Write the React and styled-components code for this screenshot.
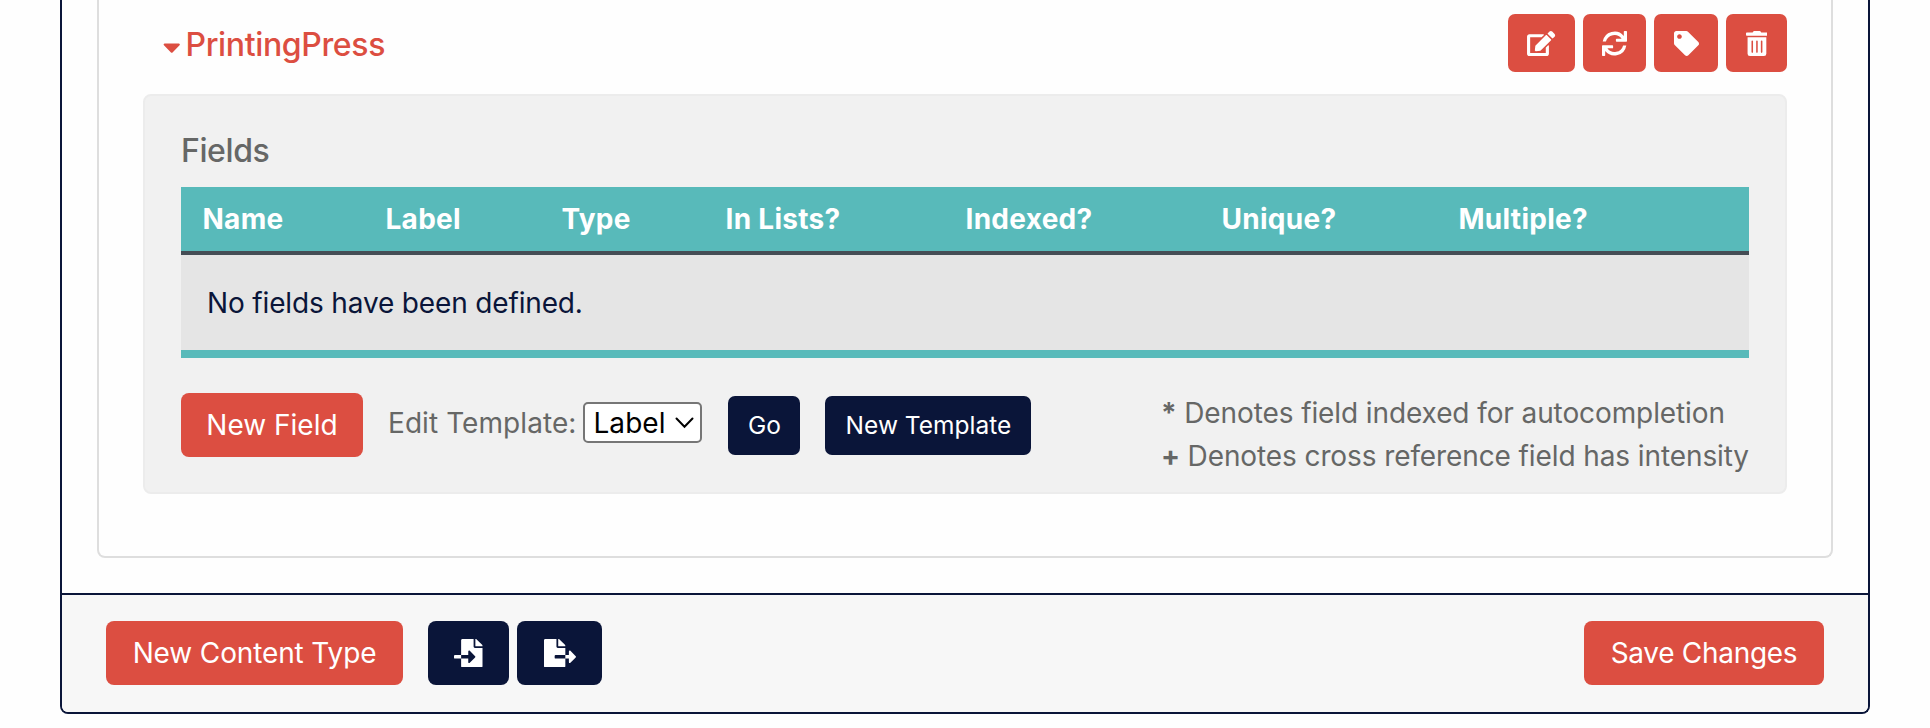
import React from 'react';
import styled, { createGlobalStyle, css } from 'styled-components';
import { FaEdit, FaTag, FaTrashAlt, FaFileImport, FaFileExport, FaCaretDown } from 'react-icons/fa';

const red = '#dc4e41';
const navy = '#0a1539';
const teal = '#58baba';
const grey = '#666766';

const GlobalStyle = createGlobalStyle`
  *, *::before, *::after { box-sizing: border-box; }
  body {
    margin: 0;
    background: #fefefe;
    color: ${grey};
    font-family: Inter, "Liberation Sans", sans-serif;
    font-size: 28px;
    line-height: 42px;
  }
`;

const Card = styled.main`
  width: 1810px;
  margin-left: 60px;
  border: 2px solid ${navy};
  border-top: 0;
  border-radius: 0 0 8px 8px;
  overflow: hidden;
  background: #fefefe;
`;

const CardBody = styled.div`
  height: 593px;
  padding: 0 35px 35px;
`;

const TypeList = styled.section`
  height: 558px;
  padding: 14px 44px 0;
  border: 2px solid #dedede;
  border-top: 0;
  border-radius: 0 0 8px 8px;
`;

const TypeHeader = styled.header`
  display: flex;
  justify-content: space-between;
  height: 80px;
`;

const TypeTitle = styled.h2`
  display: flex;
  align-items: center;
  gap: 5px;
  height: 58px;
  margin: 2px 0 0 20px;
  color: ${red};
  font-size: 32px;
  font-weight: 500;
  letter-spacing: -0.36px;
`;

const Caret = styled(FaCaretDown)`
  width: 17.5px;
  height: 28px;
  margin-top: 4px;
`;

const ButtonGroup = styled.div`
  display: flex;
  align-items: flex-start;
  gap: 8px;
`;

const sizes = {
  large: css`
    height: 64px;
    border-radius: 8px;
    font-size: 28px;
  `,
  small: css`
    height: 59px;
    border-radius: 7px;
    font-size: 24.5px;
  `,
  icon: css`
    height: 58px;
    border-radius: 7px;
  `,
};

const Button = styled.button`
  display: flex;
  flex: none;
  align-items: center;
  justify-content: center;
  width: ${({ $width }) => $width}px;
  padding: 0;
  border: 0;
  background: ${({ $dark }) => ($dark ? navy : red)};
  color: #fff;
  font-family: inherit;
  letter-spacing: ${({ $tracking = 0 }) => $tracking}px;
  ${({ $size = 'large' }) => sizes[$size]}

  svg {
    width: ${({ $icon }) => $icon}px;
    height: ${({ $size }) => ($size === 'icon' ? 25 : 28.5)}px;
  }
`;

const FieldsPanel = styled.div`
  height: 400px;
  padding: 36px 36px 0;
  border: 2px solid #ececec;
  border-radius: 8px;
  background: #f1f1f1;
`;

const PanelTitle = styled.h3`
  margin: 0 0 17px;
  font-size: 32px;
  font-weight: 500;
  line-height: 38px;
  letter-spacing: -0.4px;
`;

const Table = styled.table`
  width: 1568px;
  table-layout: fixed;
  border-spacing: 0;
  border-bottom: 8px solid ${teal};
`;

const HeadCell = styled.th`
  width: ${({ $width }) => $width}px;
  height: 68px;
  padding: 0 0 0 21.5px;
  border-bottom: 4px solid #454d55;
  background: ${teal};
  color: #fff;
  font-weight: 700;
  letter-spacing: 0.28px;
  text-align: left;
`;

const EmptyCell = styled.td`
  height: 95px;
  padding: 0 26px;
  background: #e5e5e5;
  color: ${navy};
  letter-spacing: -0.15px;
`;

const PanelFooter = styled.div`
  display: flex;
  align-items: flex-start;
  justify-content: space-between;
  padding-top: 34px;
`;

const Actions = styled.div`
  display: flex;
  align-items: center;
  height: 66px;
`;

const TemplatePicker = styled.div`
  display: flex;
  align-items: center;
  gap: 7px;
  margin: 0 26px 5px 25px;
  letter-spacing: 0.07px;
`;

const Select = styled.div`
  display: flex;
  align-items: center;
  gap: 9px;
  width: 119px;
  height: 41px;
  padding-left: 8px;
  border: 2px solid #767676;
  border-radius: 5px;
  background: #fff;
  color: #000;
`;

const Chevron = styled.svg`
  width: 19px;
  height: 12px;
  fill: none;
  stroke: #000;
  stroke-width: 2;
  stroke-linecap: round;
`;

const SmallButtons = styled.div`
  display: flex;
  gap: 25px;
`;

const Notes = styled.div`
  line-height: 43px;
  letter-spacing: -0.1px;
  white-space: nowrap;
`;

const CardFooter = styled.footer`
  display: flex;
  justify-content: space-between;
  height: 119px;
  padding: 26px 44px 0;
  border-top: 2px solid ${navy};
  background: #f7f7f7;
`;

const FooterActions = styled.div`
  display: flex;
  gap: 25px;
`;

const refreshArrow =
  'M.7 10.6A12 12 0 0 1 21.8 4.9V.8q0-.7.7-.7h1.8q.7 0 .7.7V10q0 .7-.7.7h-9.7q-.7 0-.7-.7V8.3q0-.6.7-.6h5A8.8 8.8 0 0 0 3.9 10.6Z';

function RefreshIcon() {
  return (
    <svg viewBox="0 0 25 25" fill="currentColor">
      <path d={refreshArrow} />
      <path d={refreshArrow} transform="rotate(180 12.5 12.5)" />
    </svg>
  );
}

const columns = [
  ['Name', 183],
  ['Label', 176],
  ['Type', 164],
  ['In Lists?', 240],
  ['Indexed?', 256],
  ['Unique?', 237],
  ['Multiple?', 312],
];

export default function App() {
  return (
    <>
      <GlobalStyle />
      <Card>
        <CardBody>
          <TypeList>
            <TypeHeader>
              <TypeTitle><Caret />PrintingPress</TypeTitle>
              <ButtonGroup>
                <Button $size="icon" $width={67} $icon={28.2} aria-label="Edit"><FaEdit /></Button>
                <Button $size="icon" $width={63} $icon={25} aria-label="Refresh"><RefreshIcon /></Button>
                <Button $size="icon" $width={64} $icon={25} aria-label="Label"><FaTag /></Button>
                <Button $size="icon" $width={61} $icon={21.9} aria-label="Delete"><FaTrashAlt /></Button>
              </ButtonGroup>
            </TypeHeader>
            <FieldsPanel>
              <PanelTitle>Fields</PanelTitle>
              <Table>
                <thead>
                  <tr>
                    {columns.map(([name, width]) => (
                      <HeadCell key={name} $width={width}>{name}</HeadCell>
                    ))}
                  </tr>
                </thead>
                <tbody>
                  <tr>
                    <EmptyCell colSpan={columns.length}>No fields have been defined.</EmptyCell>
                  </tr>
                </tbody>
              </Table>
              <PanelFooter>
                <Actions>
                  <Button $width={182}>New Field</Button>
                  <TemplatePicker>
                    Edit Template:
                    <Select>
                      Label
                      <Chevron viewBox="0 0 19 12"><path d="M1.5 1.5 9.5 9.8 17.5 1.5" /></Chevron>
                    </Select>
                  </TemplatePicker>
                  <SmallButtons>
                    <Button $size="small" $dark $width={72}>Go</Button>
                    <Button $size="small" $dark $width={206}>New Template</Button>
                  </SmallButtons>
                </Actions>
                <Notes>
                  <div><b>*</b> Denotes field indexed for autocompletion</div>
                  <div><b>+</b> Denotes cross reference field has intensity</div>
                </Notes>
              </PanelFooter>
            </FieldsPanel>
          </TypeList>
        </CardBody>
        <CardFooter>
          <FooterActions>
            <Button $width={297} $tracking={-0.13}>New Content Type</Button>
            <ButtonGroup>
              <Button $dark $width={81} $icon={28.5} aria-label="Import"><FaFileImport /></Button>
              <Button $dark $width={85} $icon={32} aria-label="Export"><FaFileExport /></Button>
            </ButtonGroup>
          </FooterActions>
          <Button $width={240} $tracking={-0.3}>Save Changes</Button>
        </CardFooter>
      </Card>
    </>
  );
}
